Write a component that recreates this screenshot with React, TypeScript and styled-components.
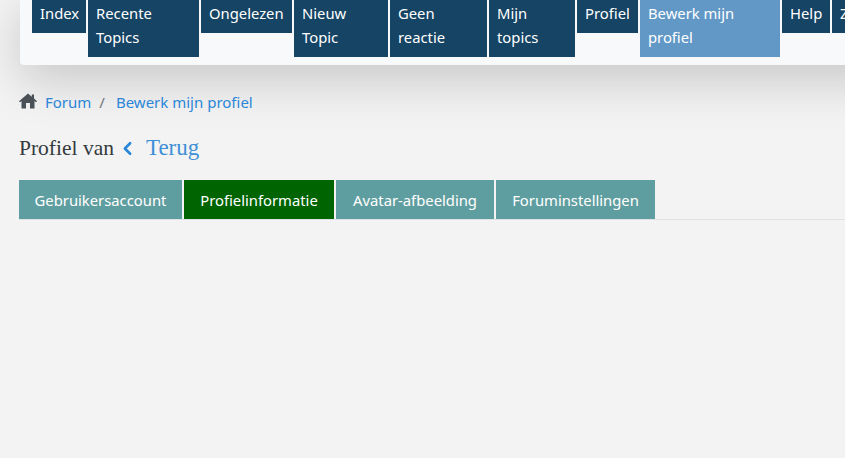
import React from 'react';
import styled, {createGlobalStyle} from 'styled-components';
import {ChevronLeft} from 'lucide-react';

const GlobalStyle = createGlobalStyle`
  html, body {
    margin: 0;
    height: 100%;
    overflow: hidden;
    background-color: #f3f3f3;
    font-family: "Noto Sans", "Open Sans", sans-serif;
  }
`;

const Page = styled.div`
  width: 845px;
  height: 458px;
  overflow: hidden;
`;

const NavCard = styled.nav`
  display: flex;
  gap: 2px;
  width: 900px;
  margin: -7px 0 0 20px;
  padding: 0 12px 8px;
  background-color: #f8f9fa;
  border-radius: 4px;
  box-shadow: 0 16px 48px rgba(0, 0, 0, 0.175);
  align-items: flex-start;
`;

const NavItem = styled.a<{$width: number; $active?: boolean}>`
  flex: none;
  box-sizing: border-box;
  width: ${({$width}) => $width}px;
  padding: 8px;
  font-size: 14.8px;
  line-height: 24px;
  color: #fff;
  background-color: ${({$active}) => ($active ? '#6298c6' : '#164464')};
`;

const Breadcrumb = styled.div`
  display: flex;
  align-items: center;
  margin: 25px 0 0 19px;
  height: 24px;
  font-size: 15px;
  color: #6c757d;
`;

const HomeSvg = styled.svg`
  width: 18px;
  height: 16px;
  margin: -2px 8px 0 0;
  fill: #495057;
`;

const CrumbLink = styled.a`
  color: #2a86d8;
`;

const Separator = styled.span`
  margin: 0 11px 0 8px;
`;

const Heading = styled.h1`
  display: flex;
  align-items: center;
  margin: 19px 0 0 19px;
  height: 30px;
  font-family: "Liberation Serif", serif;
  font-size: 21.5px;
  font-weight: 400;
  color: #343a40;
`;

const BackIcon = styled(ChevronLeft)`
  width: 21px;
  height: 21px;
  margin: 1px 8px 0 3px;
  color: #2a86d8;
`;

const BackLink = styled.a`
  font-size: 23px;
  color: #3d8fd6;
`;

const Tabs = styled.div`
  display: flex;
  gap: 2px;
  margin: 17px 0 0 19px;
  border-bottom: 1px solid #dee2e6;
`;

const Tab = styled.a<{$width: number; $active?: boolean}>`
  box-sizing: border-box;
  width: ${({$width}) => $width}px;
  height: 39px;
  font-size: 14.8px;
  line-height: 41px;
  text-align: center;
  color: #fff;
  background-color: ${({$active}) => ($active ? '#006400' : '#5f9ea0')};
`;

const navItems = [
  {label: 'Index', width: 54},
  {label: 'Recente Topics', width: 111},
  {label: 'Ongelezen', width: 91},
  {label: 'Nieuw Topic', width: 94},
  {label: 'Geen reactie', width: 97},
  {label: 'Mijn topics', width: 86},
  {label: 'Profiel', width: 61},
  {label: 'Bewerk mijn profiel', width: 140, active: true},
  {label: 'Help', width: 48},
  {label: 'Zoeken', width: 80},
];

const tabs = [
  {label: 'Gebruikersaccount', width: 163},
  {label: 'Profielinformatie', width: 150, active: true},
  {label: 'Avatar-afbeelding', width: 158},
  {label: 'Foruminstellingen', width: 159},
];

const App = () => {
  return (
    <Page>
      <GlobalStyle />
      <NavCard>
        {navItems.map(item => (
          <NavItem key={item.label} $width={item.width} $active={item.active}>
            {item.label}
          </NavItem>
        ))}
      </NavCard>
      <Breadcrumb>
        <HomeSvg viewBox="0 0 18 15">
          <path d="M9 0 L12.8 3.2 V1 H15 V5.1 L18 7.7 L17 8.8 L15.5 7.6 V15 H11 V9.5 H7 V15 H2.5 V7.6 L1 8.8 L0 7.7 Z" />
        </HomeSvg>
        <CrumbLink>Forum</CrumbLink>
        <Separator>/</Separator>
        <CrumbLink>Bewerk mijn profiel</CrumbLink>
      </Breadcrumb>
      <Heading>
        Profiel van
        <BackIcon strokeWidth={3} />
        <BackLink>Terug</BackLink>
      </Heading>
      <Tabs>
        {tabs.map(tab => (
          <Tab key={tab.label} $width={tab.width} $active={tab.active}>
            {tab.label}
          </Tab>
        ))}
      </Tabs>
    </Page>
  );
};

export default App;
